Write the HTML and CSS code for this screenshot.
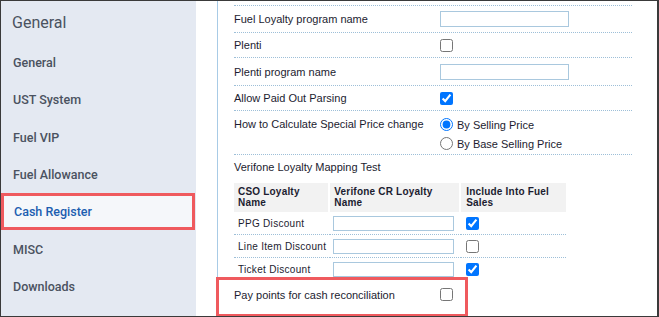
FILE: index.html
```html
<!DOCTYPE html>
<html>
<head>
<meta charset="utf-8">
<link rel="stylesheet" href="styles.css">
</head>
<body>
<div class="frame">
  <aside class="sidebar">
    <div class="side-title">General</div>
    <div class="side-item">General</div>
    <div class="side-item">UST System</div>
    <div class="side-item">Fuel VIP</div>
    <div class="side-item">Fuel Allowance</div>
    <div class="side-item active">Cash Register</div>
    <div class="side-item">MISC</div>
    <div class="side-item">Downloads</div>
  </aside>
  <main class="content">
    <div class="panel">
      <div class="row r1"><div class="label">Fuel Loyalty program name</div><div class="ctrl"><input class="txt" type="text"></div></div>
      <div class="row r2"><div class="label">Plenti</div><div class="ctrl"><input class="cb" type="checkbox"></div></div>
      <div class="row r3"><div class="label">Plenti program name</div><div class="ctrl"><input class="txt" type="text"></div></div>
      <div class="row r4"><div class="label">Allow Paid Out Parsing</div><div class="ctrl"><input class="cb" type="checkbox" checked></div></div>
      <div class="row r5 top"><div class="label">How to Calculate Special Price change</div>
        <div class="ctrl radios">
          <label class="radio"><input type="radio" name="p" checked> By Selling Price</label>
          <label class="radio"><input type="radio" name="p"> By Base Selling Price</label>
        </div>
      </div>
      <div class="section">
        <div class="section-title">Verifone Loyalty Mapping Test</div>
        <table class="map">
          <thead>
            <tr><th class="c1">CSO Loyalty Name</th><th class="c2">Verifone CR Loyalty Name</th><th class="c3">Include Into Fuel Sales</th></tr>
          </thead>
          <tbody>
            <tr><td>PPG Discount</td><td><input class="txt small" type="text"></td><td class="cbcell"><input class="cb" type="checkbox" checked></td></tr>
            <tr><td>Line Item Discount</td><td><input class="txt small" type="text"></td><td class="cbcell"><input class="cb" type="checkbox"></td></tr>
            <tr><td>Ticket Discount</td><td><input class="txt small" type="text"></td><td class="cbcell"><input class="cb" type="checkbox" checked></td></tr>
          </tbody>
        </table>
      </div>
      <div class="row last highlight"><div class="label">Pay points for cash reconciliation</div><div class="ctrl"><input class="cb" type="checkbox"></div></div>
    </div>
  </main>
</div>
</body>
</html>
```
FILE: styles.css
```css
* { box-sizing: border-box; }
html, body { margin: 0; padding: 0; background: #fff; }
.frame {
  width: 659px;
  height: 317px;
  border: 1px solid #3a3a3a;
  border-right-width: 2px;
  display: flex;
  overflow: hidden;
}
.sidebar {
  width: 195px;
  flex: none;
  background: #e4e9f2;
  font-family: Roboto, "Liberation Sans", sans-serif;
  color: #4a5260;
}
.side-title {
  height: 43px;
  padding-left: 11px;
  font-size: 16px;
  line-height: 43px;
}
.side-item {
  height: 37.3px;
  padding-left: 12px;
  font-size: 12.5px;
  font-weight: 500;
  display: flex;
  align-items: center;
}
.side-item.active {
  background: #f5f7fa;
  color: #1c5eb0;
  border: 3px solid #ef5a5e;
  padding-left: 10px;
  margin-right: 1px;
}
.content {
  flex: 1;
  padding-left: 21px;
  background: #fff;
}
.panel {
  height: 100%;
  border-left: 1px solid #a8cbe6;
  padding: 4px 25px 0 16px;
  font-family: "Liberation Sans", Arial, sans-serif;
  font-size: 11px;
  color: #1c1c30;
}
.row {
  display: flex;
  align-items: center;
  border-top: 1px dotted #9dbfd8;
}
.row.top { align-items: flex-start; }
.label { width: 206px; flex: none; }
.ctrl { display: flex; align-items: center; }
.r1 { height: 27px; }
.r2 { height: 25px; }
.r3 { height: 28px; }
.r4 { height: 25px; }
.r5 { height: 44px; padding-top: 7px; }
.radios { flex-direction: column; align-items: flex-start; gap: 6px; }
.radio { display: flex; align-items: center; gap: 4px; height: 13px; }
.radio input { margin: 0; width: 13px; height: 13px; }
.txt {
  width: 129px;
  height: 16px;
  border: 1px solid #a9c8de;
  margin: 0;
  padding: 0;
}
.txt.small { width: 121px; height: 15px; }
.cb { margin: 0; width: 13px; height: 13px; }
.section { border-top: 1px dotted #9dbfd8; padding-top: 6px; }
.section-title { height: 22px; line-height: 13px; }
.map {
  border-collapse: separate;
  border-spacing: 0;
  font-size: 10px;
  width: 332px;
}
.map th {
  background: #f2f2f2;
  text-align: left;
  font-weight: bold;
  letter-spacing: 0.2px;
  line-height: 11px;
  padding: 3px 4px 4px;
  height: 27px;
  vertical-align: middle;
  border-right: 2px solid #fff;
}
.map th.c1 { width: 91px; }
.map th.c2 { width: 131px; }
.map th.c3 { border-right: 0; padding-left: 5px; }
.map td {
  padding: 3px 4px;
  height: 23px;
  letter-spacing: 0.3px;
  border-top: 1px dotted #9dbfd8;
  white-space: nowrap;
}
.map td:nth-child(2) { padding-left: 3px; }
.map tbody tr:first-child td { border-top: 0; height: 22px; }
.map td.cbcell { padding-left: 5px; }
.map td .cb { display: block; }
.row.last {
  height: 33px;
  border-top: 0;
  position: relative;
  margin-top: -2px;
}
.highlight::after {
  content: "";
  position: absolute;
  left: -18px;
  top: -1px;
  width: 246px;
  height: 34px;
  border: 3px solid #ef5a5e;
}
```
